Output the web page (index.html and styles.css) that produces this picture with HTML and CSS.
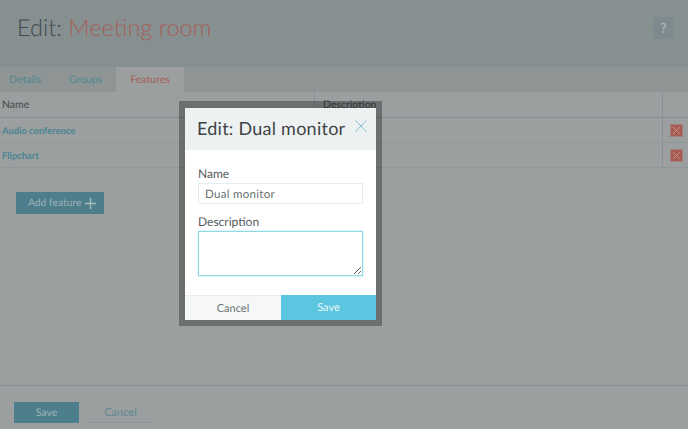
FILE: index.html
```html
<!DOCTYPE html>
<html lang="en">
<head>
    <meta charset="UTF-8">
    <meta name="viewport" content="width=device-width, initial-scale=1.0">
    <title>Edit: Meeting room</title>
    <link rel="stylesheet" href="styles.css">
</head>
<body>

<div class="page">
    <div class="header">
        <h1><span class="edit-label">Edit:</span> <span class="edit-name">Meeting room</span></h1>
        <a class="help" href="#">?</a>
    </div>

    <div class="tabs">
        <a class="tab" href="#">Details</a>
        <a class="tab" href="#">Groups</a>
        <a class="tab active" href="#">Features</a>
    </div>

    <div class="feature-table">
        <div class="row head">
            <div class="col-name">Name</div>
            <div class="col-desc">Description</div>
            <div class="col-action"></div>
        </div>
        <div class="row">
            <div class="col-name"><a href="#">Audio conference</a></div>
            <div class="col-desc"></div>
            <div class="col-action">
                <button class="delete">
                    <svg viewBox="0 0 13 13" width="13" height="13"><path d="M3 3l7 7M10 3l-7 7"/></svg>
                </button>
            </div>
        </div>
        <div class="row">
            <div class="col-name"><a href="#">Flipchart</a></div>
            <div class="col-desc"></div>
            <div class="col-action">
                <button class="delete">
                    <svg viewBox="0 0 13 13" width="13" height="13"><path d="M3 3l7 7M10 3l-7 7"/></svg>
                </button>
            </div>
        </div>
    </div>

    <div class="content">
        <button class="add-feature">Add feature
            <svg viewBox="0 0 11 11" width="11" height="11"><path d="M5.5 0v11M0 5.5h11"/></svg>
        </button>
    </div>

    <div class="footer">
        <button class="save">Save</button>
        <a class="cancel" href="#">Cancel</a>
    </div>
</div>

<!-- dialog -->
<div class="modal">
    <div class="modal-inner">
        <div class="modal-header">
            <h2>Edit: Dual monitor</h2>
            <button class="modal-close">
                <svg viewBox="0 0 12 12" width="12" height="12"><path d="M0.5 0.5l11 11M11.5 0.5l-11 11"/></svg>
            </button>
        </div>
        <div class="modal-body">
            <label for="featureName">Name</label>
            <input id="featureName" type="text" value="Dual monitor">
            <label for="featureDesc">Description</label>
            <textarea id="featureDesc"></textarea>
        </div>
        <div class="modal-footer">
            <button class="modal-cancel">Cancel</button>
            <button class="modal-save">Save</button>
        </div>
    </div>
</div>

</body>
</html>
```

FILE: styles.css
```css
body {
    font-family: Lato, "Open Sans", sans-serif;
    margin: 0;
    padding: 0;
    background-color: #9b9f9f;
    color: #3f4546;
    overflow: hidden;
    text-rendering: geometricPrecision;
}
a {
    text-decoration: none;
}
button {
    font-family: inherit;
    text-rendering: inherit;
    border: none;
    padding: 0;
    cursor: pointer;
}
.page {
    height: 429px;
    display: flex;
    flex-direction: column;
}
.header {
    height: 67px;
    flex: none;
    box-sizing: border-box;
    padding: 0 14px 0 17px;
    background: #879091;
    display: flex;
    align-items: center;
    justify-content: space-between;
}
.header h1 {
    margin: 0 0 11px;
    font-size: 23.5px;
    font-weight: 300;
}
.edit-label {
    color: #434a4b;
}
.edit-name {
    color: #a65f58;
}
.help {
    width: 21px;
    height: 22px;
    margin-bottom: 11px;
    background: #7d8a8f;
    color: #aab1b2;
    font-size: 14px;
    font-weight: 700;
    line-height: 22px;
    text-align: center;
}
.tabs {
    height: 25px;
    flex: none;
    background: #8f9595;
    display: flex;
}
.tab {
    padding: 0 14px;
    color: #4f8791;
    font-size: 10.5px;
    line-height: 27px;
}
.tab:first-child {
    padding-left: 9px;
}
.tab.active {
    background: #9b9f9f;
    color: #a65f58;
}
.row {
    height: 25px;
    display: flex;
    box-sizing: border-box;
    border-bottom: 1px solid #929797;
}
.row.head {
    height: 26px;
    border-bottom: 1px solid #868d8e;
    color: #444a4b;
    line-height: 26px;
}
.col-name {
    width: 314px;
    box-sizing: border-box;
    padding-left: 2px;
    font-size: 10.5px;
}
.row:not(.head) .col-name {
    font-size: 9.4px;
    font-weight: 700;
    line-height: 27px;
}
.col-name a {
    color: #4a8592;
}
.col-desc {
    width: 348px;
    box-sizing: border-box;
    padding-left: 8px;
    border-left: 1px solid #8a9192;
    font-size: 10.5px;
}
.col-action {
    width: 26px;
    box-sizing: border-box;
    border-left: 1px solid #8a9192;
    padding: 6px 0 0 7px;
}
.delete {
    display: block;
    width: 13px;
    height: 13px;
    background: #a95c53;
    outline: 1px solid #a3827d;
    outline-offset: -1px;
}
.delete svg {
    display: block;
    fill: none;
    stroke: #c18f88;
    stroke-width: 1;
}
.content {
    flex: 1;
    padding: 24px 16px 0;
}
.add-feature {
    width: 88px;
    height: 22px;
    box-sizing: border-box;
    padding-left: 12px;
    background: #4d7e8b;
    color: #9db1b5;
    font-size: 10.3px;
    display: flex;
    align-items: center;
    gap: 4px;
}
.add-feature svg {
    fill: none;
    stroke: #a9babd;
    stroke-width: 1.4;
}
.footer {
    height: 44px;
    flex: none;
    box-sizing: border-box;
    border-top: 1px solid #878d8e;
    padding: 16px 0 0 14px;
    display: flex;
    gap: 9px;
}
.save {
    width: 65px;
    height: 21px;
    background: #4d7e8b;
    color: #9db1b5;
    font-size: 10.5px;
}
.cancel {
    width: 65px;
    height: 20px;
    border-bottom: 1px solid #8c9899;
    color: #5e8792;
    font-size: 11px;
    line-height: 21px;
    text-align: center;
}

/* dialog */
.modal {
    position: absolute;
    left: 179px;
    top: 101px;
    width: 203px;
    height: 225px;
    box-sizing: border-box;
    padding: 7px 6px 6px;
    background: rgba(0, 0, 0, 0.3);
}
.modal-inner {
    height: 212px;
    background: #fff;
    display: flex;
    flex-direction: column;
}
.modal-header {
    height: 42px;
    flex: none;
    background: #eef1f2;
    box-sizing: border-box;
    padding-left: 12px;
    display: flex;
    justify-content: space-between;
}
.modal-header h2 {
    margin: 0;
    font-size: 18px;
    font-weight: 400;
    color: #3f4546;
    line-height: 41px;
    letter-spacing: 0.25px;
}
.modal-close {
    width: 12px;
    height: 12px;
    margin: 12px 9px 0 0;
    background: none;
}
.modal-close svg {
    display: block;
    fill: none;
    stroke: #84c0ce;
    stroke-width: 1;
}
.modal-body {
    flex: 1;
    padding: 16px 13px 0;
    display: flex;
    flex-direction: column;
}
.modal-body label {
    font-size: 12px;
    line-height: 15px;
    color: #555c5d;
    margin-bottom: 2px;
}
.modal-body input {
    height: 21px;
    box-sizing: border-box;
    border: 1px solid #e3ecee;
    margin-bottom: 10px;
    padding: 1px 6px 0;
    font-family: inherit;
    text-rendering: inherit;
    font-size: 11.5px;
    letter-spacing: 0.3px;
    color: #6a7172;
    outline: none;
}
.modal-body textarea {
    height: 45px;
    box-sizing: border-box;
    margin: 0;
    border: 1px solid #8fd8e6;
    box-shadow: 0 0 2px #a8e2ec;
    outline: none;
    resize: both;
}
.modal-footer {
    height: 25px;
    flex: none;
    display: flex;
}
.modal-cancel {
    width: 96px;
    background: #f6f8f8;
    border-top: 1px solid #e9eef0;
    color: #6b7273;
    font-size: 11px;
}
.modal-save {
    flex: 1;
    padding-bottom: 1px;
    background: #5bc6e0;
    color: #e9f7fa;
    font-size: 11px;
}
```
